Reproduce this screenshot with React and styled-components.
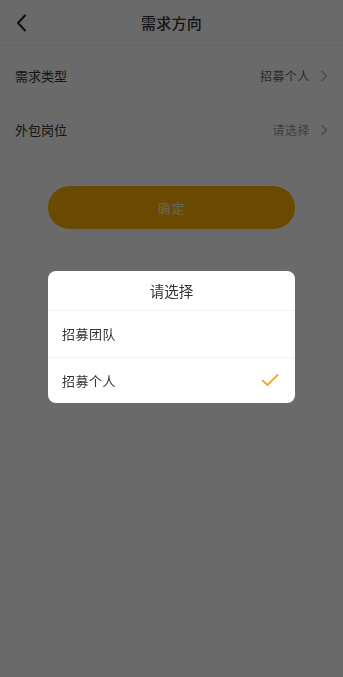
import styled, { createGlobalStyle } from "styled-components"

const Global = createGlobalStyle`
    html, body {
        margin: 0;
        padding: 0;
        background: #fff;
        font-family: "Noto Sans CJK SC", "Noto Sans", sans-serif;
    }
    * { box-sizing: border-box; }
`
const Page = styled.div`
    width: 343px;
    height: 677px;
    background: #fff;
    display: flex;
    flex-direction: column;
`
const NavBar = styled.div`
    height: 46px;
    display: flex;
    align-items: center;
    justify-content: center;
    position: relative;
    border-bottom: 1px solid #f4f4f4;
    margin-bottom: 3px;
`
const BackButton = styled.div`
    position: absolute;
    left: 15px;
    top: 13px;
    width: 16px;
    height: 20px;
    display: flex;
    align-items: center;
`
const Title = styled.div`
    font-size: 15px;
    font-weight: 500;
    color: #333;
    letter-spacing: 0.2px;
`
const Row = styled.div`
    height: 54px;
    margin: 0 15px;
    display: flex;
    align-items: center;
    justify-content: space-between;
    border-bottom: 1px solid #f6f6f6;
`
const Label = styled.div`
    font-size: 13px;
    color: #333;
`
const Value = styled.div`
    display: flex;
    align-items: center;
    gap: 10px;
    font-size: 12px;
    letter-spacing: 0.5px;
    color: ${p => (p.$placeholder ? "#999" : "#666")};
`
const ConfirmButton = styled.button`
    margin: 29px auto 0;
    width: 247px;
    height: 43px;
    border: none;
    border-radius: 22px;
    background: #ffb300;
    color: rgba(255, 255, 255, 0.85);
    font-family: inherit;
    font-size: 13px;
    letter-spacing: 1px;
`
const Mask = styled.div`
    position: fixed;
    inset: 0;
    background: rgba(0, 0, 0, 0.585);
    display: flex;
    align-items: center;
    justify-content: center;
`
const Dialog = styled.div`
    width: 247px;
    margin-bottom: 4px;
    background: #fff;
    border-radius: 8px;
    overflow: hidden;
    display: flex;
    flex-direction: column;
`
const DialogTitle = styled.div`
    height: 40px;
    display: flex;
    align-items: center;
    justify-content: center;
    font-size: 14.5px;
    color: #333;
    border-bottom: 1px solid #f4f4f4;
`
const Option = styled.div`
    height: 46px;
    padding: 0 16px 0 14px;
    display: flex;
    align-items: center;
    justify-content: space-between;
    font-size: 13px;
    letter-spacing: 0.5px;
    color: #333;
    & + & { border-top: 1px solid #f4f4f4; }
`

const ChevronRight = () => (
    <svg width="8" height="12" viewBox="0 0 8 12">
        <path d="M1.5 1 L6.5 6 L1.5 11" fill="none" stroke="#aaa" strokeWidth="1.2" />
    </svg>
)

const ChevronLeft = () => (
    <svg width="12" height="18" viewBox="0 0 12 18">
        <path d="M10 1.5 L3 9 L10 16.5" fill="none" stroke="#222" strokeWidth="2" strokeLinecap="round" strokeLinejoin="round" />
    </svg>
)

const Check = () => (
    <svg width="18" height="14" viewBox="0 0 18 14">
        <path d="M1.5 7.5 L6.5 12 L16.5 2" fill="none" stroke="#f5a623" strokeWidth="1.8" strokeLinecap="round" strokeLinejoin="round" />
    </svg>
)

const options = [
    { id: "team", name: "招募团队" },
    { id: "person", name: "招募个人" },
]

const App = () => {
    const selected = "person"

    return (
        <>
            <Global />
            <Page>
                <NavBar>
                    <BackButton><ChevronLeft /></BackButton>
                    <Title>需求方向</Title>
                </NavBar>
                <Row>
                    <Label>需求类型</Label>
                    <Value>招募个人<ChevronRight /></Value>
                </Row>
                <Row>
                    <Label>外包岗位</Label>
                    <Value $placeholder>请选择<ChevronRight /></Value>
                </Row>
                <ConfirmButton>确定</ConfirmButton>
            </Page>
            <Mask>
                <Dialog>
                    <DialogTitle>请选择</DialogTitle>
                    {options.map(opt => (
                        <Option key={opt.id}>
                            {opt.name}
                            {opt.id === selected && <Check />}
                        </Option>
                    ))}
                </Dialog>
            </Mask>
        </>
    )
}

export default App
